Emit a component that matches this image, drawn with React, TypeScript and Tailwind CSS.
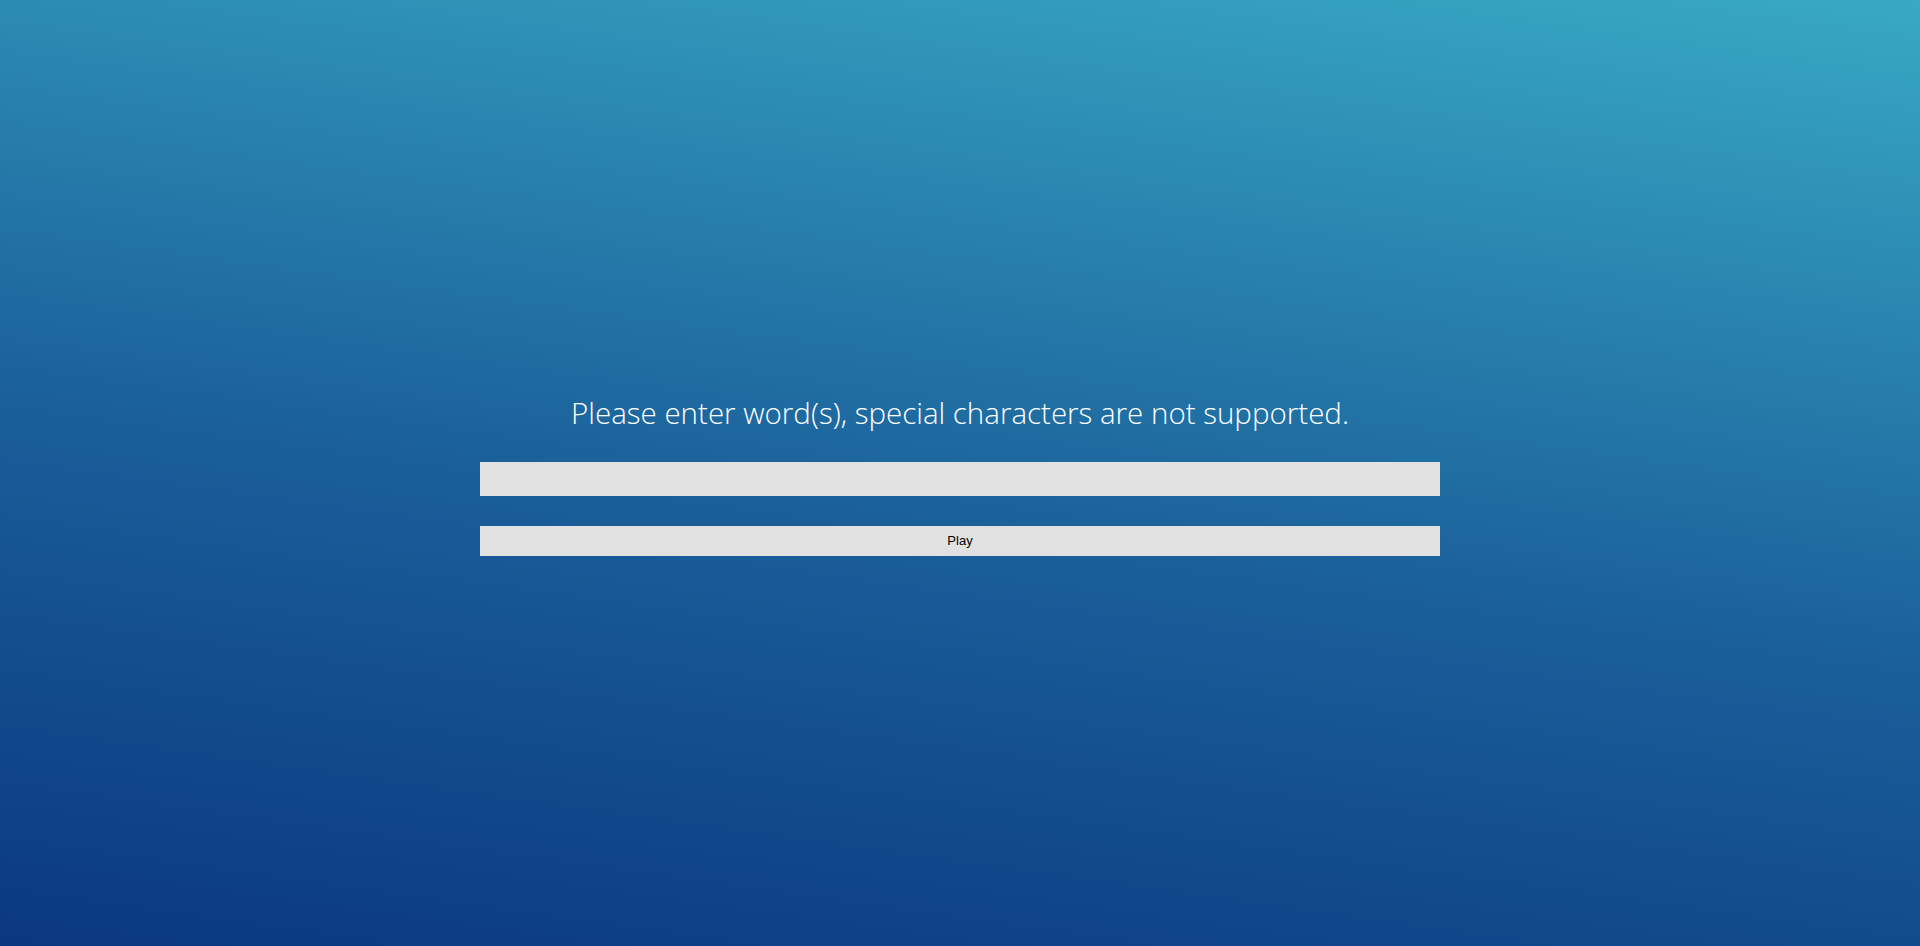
import React from "react";

export default function App() {
  return (
    <div className="min-h-screen w-full bg-[linear-gradient(8deg,#0a3880_0%,#1a5f9a_45%,#38a9c4_100%)] flex flex-col items-center pt-[393px]">
      <h1 className="text-white text-[29.5px] leading-[40px] font-light text-center font-['Open_Sans','Noto_Sans',sans-serif]">
        Please enter word(s), special characters are not supported.
      </h1>
      <div className="w-[960px] mt-[29px] flex flex-col gap-[30px] font-['Liberation_Sans',Arial,sans-serif]">
        <input
          type="text"
          className="h-[34px] w-full bg-[#e1e1e1] outline-none border-0 px-2 text-[13px]"
        />
        <button className="h-[30px] w-full bg-[#e1e1e1] text-black text-[13px]">
          Play
        </button>
      </div>
    </div>
  );
}
